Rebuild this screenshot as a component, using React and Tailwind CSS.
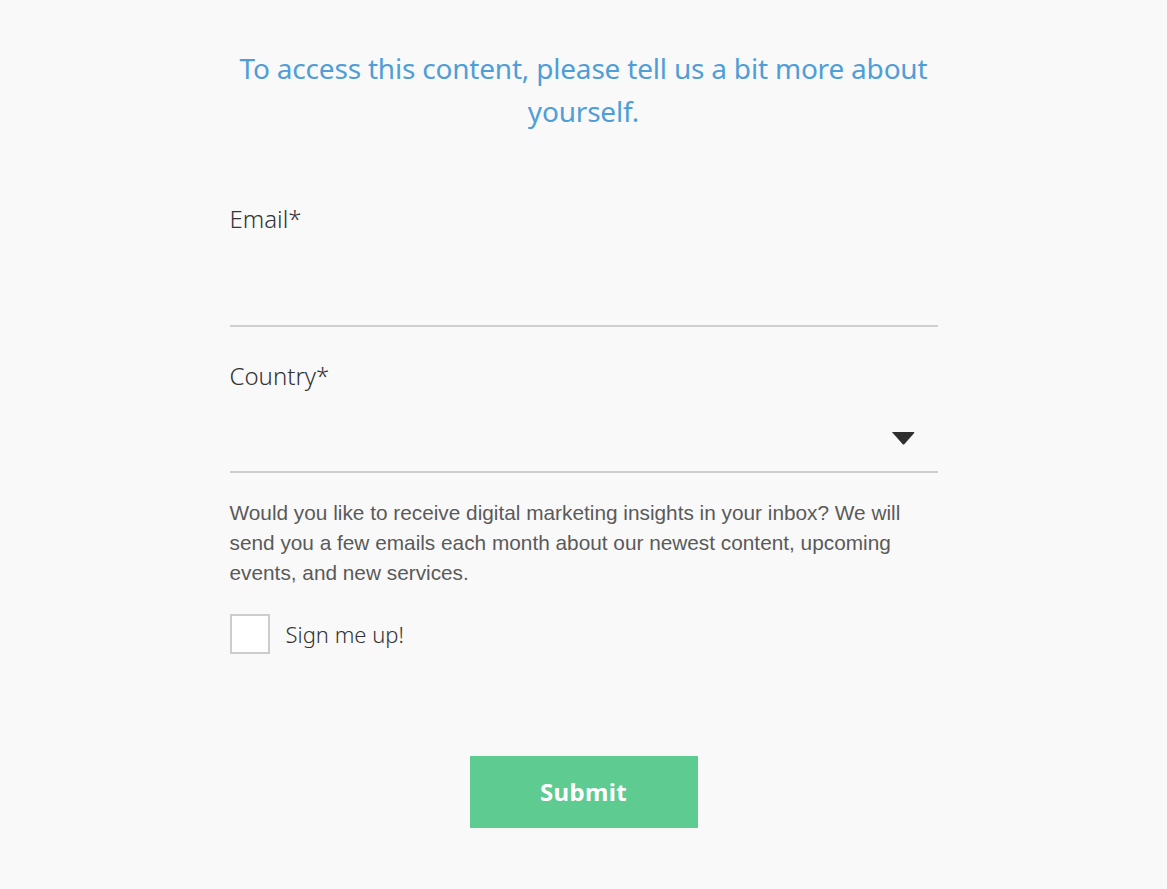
export default function App() {
  return (
    <div className="min-h-screen bg-[#f9f9f9] flex justify-center" style={{ fontFamily: '"Noto Sans", "Open Sans", sans-serif' }}>
      <div className="w-[708px] pt-[47px]">
        {/* Heading */}
        <h1 className="text-center text-[28px] leading-[43px] text-[#4f9ed8] font-normal tracking-[-0.2px]">
          To access this content, please tell us a bit more about yourself.
        </h1>

        {/* Email */}
        <div className="mt-[69px]">
          <label className="block text-[24px] leading-[34px] font-light text-[#333]">Email*</label>
          <input
            type="email"
            className="block w-full h-[91px] bg-transparent border-b-2 border-[#cfcfcf] focus:outline-none"
          />
        </div>

        {/* Country */}
        <div className="mt-[32px]">
          <label className="block text-[24px] leading-[34px] font-light text-[#333]">Country*</label>
          <div className="relative h-[80px] border-b-2 border-[#cfcfcf]">
            <svg
              className="absolute right-[23px] top-[39px]"
              width="23"
              height="13"
              viewBox="0 0 23 13"
            >
              <path d="M0 1 Q0 0 1.5 0 L21.5 0 Q23 0 22 1.2 L12.5 12 Q11.5 13 10.5 12 L1 1.2 Z" fill="#2f2f2f" />
            </svg>
          </div>
        </div>

        {/* Marketing text */}
        <p
          className="mt-[25px] text-[20.8px] leading-[30px] text-[#5a5a5a] pr-[10px]"
          style={{ fontFamily: '"Liberation Sans", Arial, sans-serif' }}
        >
          Would you like to receive digital marketing insights in your inbox? We will send you a few emails each month about our newest content, upcoming events, and new services.
        </p>

        {/* Checkbox */}
        <label className="mt-[26px] flex items-center gap-[16px]">
          <span className="w-[40px] h-[40px] bg-white border-2 border-[#cccccc]" />
          <span className="text-[22px] font-light text-[#333]">Sign me up!</span>
        </label>

        {/* Submit */}
        <div className="mt-[102px] flex justify-center">
          <button className="w-[228px] h-[72px] bg-[#5ecb91] text-white text-[24px] font-bold tracking-[0.3px]">
            Submit
          </button>
        </div>
      </div>
    </div>
  );
}
